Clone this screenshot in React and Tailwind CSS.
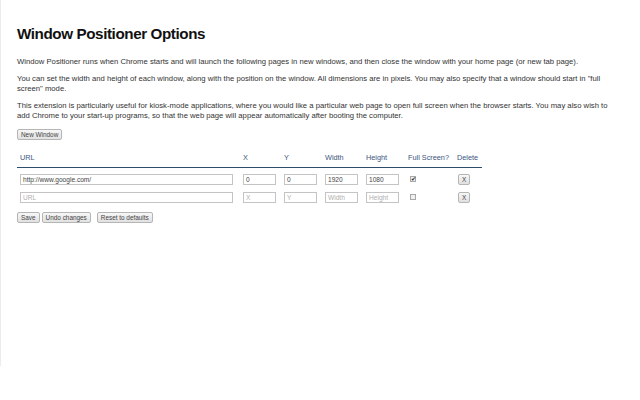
import React from "react";

const font = { fontFamily: '"Liberation Sans", Arial, sans-serif' };

function Btn({ children, className = "" }) {
  return (
    <button
      className={`flex items-center justify-center h-[11px] px-[3px] text-[6.4px] leading-[9px] text-[#444] border border-[#b5b5b5] rounded-[2px] bg-gradient-to-b from-[#f7f7f7] to-[#e1e1e1] ${className}`}
      style={font}
    >
      {children}
    </button>
  );
}

function Field({ value, placeholder, w }) {
  return (
    <div
      className={`${w} h-[11px] border border-[#c4c4c4] bg-white px-[2px] text-[6.6px] leading-[9px] ${value ? "text-[#444]" : "text-[#b0b0b0]"}`}
    >
      {value || placeholder}
    </div>
  );
}

function Row({ url, x, y, w, h, checked }) {
  return (
    <div className="grid grid-cols-[223px_41px_41px_41px_42px_49px_25px] pl-[3px] h-[18px] items-start">
      <Field value={url} placeholder="URL" w="w-[213px]" />
      <Field value={x} placeholder="X" w="w-[33px]" />
      <Field value={y} placeholder="Y" w="w-[33px]" />
      <Field value={w} placeholder="Width" w="w-[33px]" />
      <Field value={h} placeholder="Height" w="w-[33px]" />
      <div className="flex pl-[2px] pt-[2px]">
        <div className="w-[6px] h-[6px] border border-[#a8a8a8] bg-[#f0f0f0] flex items-center justify-center text-[6px] leading-[6px] text-[#222]">
          {checked ? "✔" : ""}
        </div>
      </div>
      <div className="flex pl-[1px]">
        <Btn className="w-[12px] px-0">X</Btn>
      </div>
    </div>
  );
}

export default function App() {
  return (
    <div className="w-[640px] h-[400px] bg-white overflow-hidden" style={font}>
      <div className="h-[366px] border-l border-[#ececec] pl-[16px] pt-[25px]">
        <h1 className="text-[15.2px] leading-[18px] font-bold text-[#111] tracking-[-0.4px]">
          Window Positioner Options
        </h1>
        <div className="mt-[14px] text-[7.7px] leading-[10px] text-[#333] w-[598px]">
          <p>
            Window Positioner runs when Chrome starts and will launch the following pages in new windows, and then close the window with your home page (or new tab page).
          </p>
          <p className="mt-[7px]">
            You can set the width and height of each window, along with the position on the window. All dimensions are in pixels. You may also specify that a window should start in "full screen" mode.
          </p>
          <p className="mt-[7px]">
            This extension is particularly useful for kiosk-mode applications, where you would like a particular web page to open full screen when the browser starts. You may also wish to add Chrome to your start-up programs, so that the web page will appear automatically after booting the computer.
          </p>
        </div>
        <div className="mt-[8px] flex">
          <Btn>New Window</Btn>
        </div>
        <div className="mt-[13px] w-[465px]">
          <div className="grid grid-cols-[223px_41px_41px_41px_42px_49px_25px] pl-[3px] text-[7.3px] leading-[10px] text-[#3c5580] pb-[4px] border-b-[1.5px] border-[#2d4d6b]">
            <div>URL</div>
            <div>X</div>
            <div>Y</div>
            <div>Width</div>
            <div>Height</div>
            <div className="whitespace-nowrap">Full Screen?</div>
            <div>Delete</div>
          </div>
          <div className="pt-[6px]">
            <Row url="http://www.google.com/" x="0" y="0" w="1920" h="1080" checked />
            <Row />
          </div>
        </div>
        <div className="mt-[2px] flex gap-[2px]">
          <Btn>Save</Btn>
          <Btn>Undo changes</Btn>
          <Btn className="ml-[4px]">Reset to defaults</Btn>
        </div>
      </div>
    </div>
  );
}
